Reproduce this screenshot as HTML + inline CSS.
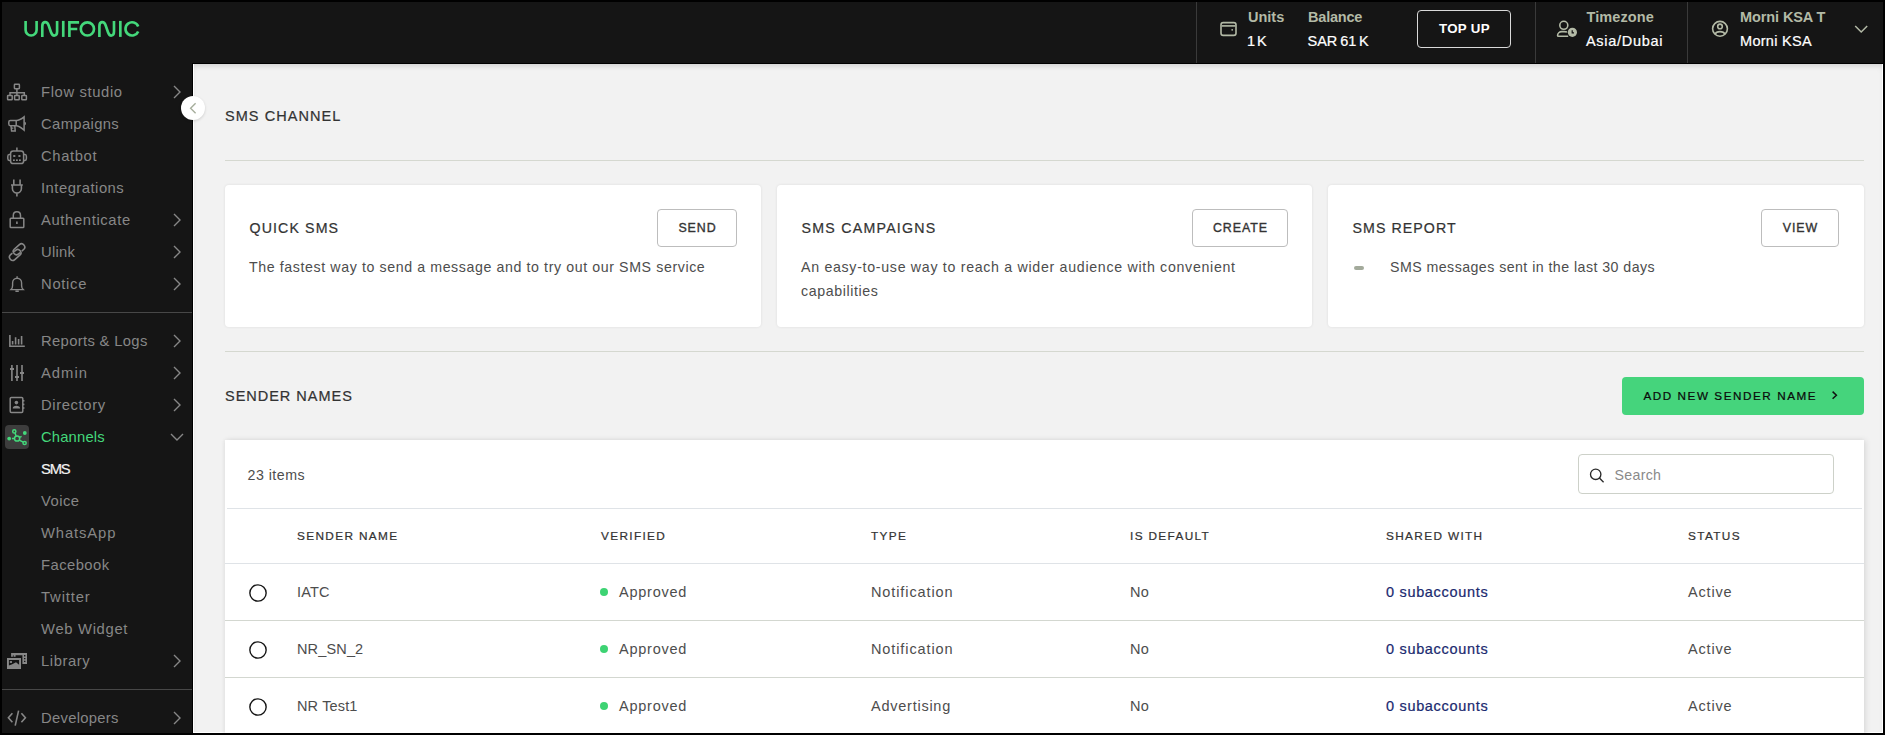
<!DOCTYPE html>
<html><head><meta charset="utf-8"><style>
html,body{margin:0;padding:0;width:1885px;height:735px;overflow:hidden;background:#000}
body{position:relative;font-family:"Liberation Sans",sans-serif}
.t{position:absolute;white-space:nowrap}
</style></head><body>
<div style="position:absolute;left:0;top:0;width:1885px;height:64px;background:#151515"></div>
<svg style="position:absolute;left:0;top:0" width="160" height="60" viewBox="0 0 160 60" fill="none" stroke="#44d87b" stroke-width="2.65">
<path d="M25.6 20.9V30A5.5 5.5 0 0 0 36.6 30V20.9"/>
<path d="M42.3 36.9V26.2C42.3 21.2 47 20.8 48.6 25.2L51 32.2C52.6 37 57.1 36.5 57.1 31.6V20.9"/>
<path d="M63.25 20.9V36.9"/>
<path d="M69.4 36.9V22.3H79.1M69.4 29H77.3"/>
<circle cx="87.4" cy="28.9" r="6.6"/>
<path d="M99.4 36.9V26.2C99.4 21.2 104 20.8 105.6 25.2L108 32.2C109.6 37 114 36.5 114 31.6V20.9"/>
<path d="M120.35 20.9V36.9"/>
<path d="M138.2 26.4A6.6 6.6 0 1 0 138.2 31.4"/>
</svg>
<div style="position:absolute;left:1196px;top:0;width:1px;height:64px;background:#3a3a3a"></div>
<div style="position:absolute;left:1535px;top:0;width:1px;height:64px;background:#3a3a3a"></div>
<div style="position:absolute;left:1687px;top:0;width:1px;height:64px;background:#3a3a3a"></div>
<svg style="position:absolute;left:1218px;top:19px" width="22" height="20" viewBox="1218 19 22 20" fill="none" stroke="#b3baa6" stroke-width="1.6">
<rect x="1221" y="22.6" width="15" height="12.8" rx="2.2"/><path d="M1221.6 25.9H1235.4"/><circle cx="1232.2" cy="29.8" r="0.9" fill="#b3baa6" stroke="none"/>
</svg>
<div class="t" style="left:1248px;top:9.27px;font-size:14.5px;line-height:17.4px;font-weight:700;color:#b3baa6;letter-spacing:0px;">Units</div>
<div class="t" style="left:1247px;top:33.27px;font-size:14.5px;line-height:17.4px;font-weight:400;color:#fff;letter-spacing:-0.2px;word-spacing:-1.6px;-webkit-text-stroke:0.22px #fff;">1 K</div>
<div class="t" style="left:1308px;top:9.27px;font-size:14.5px;line-height:17.4px;font-weight:700;color:#b3baa6;letter-spacing:-0.2px;">Balance</div>
<div class="t" style="left:1307.5px;top:33.27px;font-size:14.5px;line-height:17.4px;font-weight:400;color:#fff;letter-spacing:0px;word-spacing:-1.2px;-webkit-text-stroke:0.22px #fff;">SAR 61 K</div>
<div style="position:absolute;left:1417px;top:10px;width:92px;height:36px;border:1px solid #d9d9d9;border-radius:4px"></div>
<div class="t" style="left:1439px;top:21.01px;font-size:13.3px;line-height:15.96px;font-weight:700;color:#fff;letter-spacing:0.3px;">TOP UP</div>
<svg style="position:absolute;left:1554px;top:19px" width="26" height="22" viewBox="0 0 26 22" fill="none" stroke="#b3baa6" stroke-width="1.6">
<circle cx="9.8" cy="6.3" r="4"/><path d="M13 13C12.2 12.7 11.2 12.6 10.2 12.6H7.8C5.4 12.6 3.6 14.4 3.6 16.2V16.4C3.6 16.9 4 17.2 4.5 17.2H14.2"/>
<circle cx="18.4" cy="13.3" r="4.6" fill="#b3baa6" stroke="none"/><path d="M18.2 11.2V13.8H20" stroke="#151515" stroke-width="1.2"/>
</svg>
<div class="t" style="left:1586.5px;top:9.07px;font-size:14.5px;line-height:17.4px;font-weight:700;color:#b3baa6;letter-spacing:0.1px;">Timezone</div>
<div class="t" style="left:1586px;top:33.47px;font-size:14.5px;line-height:17.4px;font-weight:400;color:#fff;letter-spacing:0.7px;-webkit-text-stroke:0.22px #fff;">Asia/Dubai</div>
<svg style="position:absolute;left:1710px;top:19px" width="20" height="20" viewBox="0 0 20 20" fill="none" stroke="#b3baa6" stroke-width="1.6">
<circle cx="10" cy="9.8" r="7.4"/><circle cx="10" cy="7.4" r="2.3"/><path d="M5 15.3C5.8 13.4 7.6 12.6 10 12.6C12.4 12.6 14.2 13.4 15 15.3"/>
</svg>
<div class="t" style="left:1740px;top:9.17px;font-size:14.5px;line-height:17.4px;font-weight:700;color:#b3baa6;letter-spacing:-0.1px;">Morni KSA T</div>
<div class="t" style="left:1740px;top:32.97px;font-size:14.5px;line-height:17.4px;font-weight:400;color:#fff;letter-spacing:0.3px;-webkit-text-stroke:0.22px #fff;">Morni KSA</div>
<svg style="position:absolute;left:1853px;top:23px" width="16" height="12" viewBox="0 0 16 12" fill="none" stroke="#b3baa6" stroke-width="1.5"><path d="M2.2 3L8.2 9L14.2 3"/></svg>
<div style="position:absolute;left:0;top:64px;width:193px;height:671px;background:#151515"></div>
<div class="t" style="left:41px;top:84.19px;font-size:14.8px;line-height:17.76px;font-weight:400;color:#878787;letter-spacing:0.62px;">Flow studio</div>
<svg style="position:absolute;left:171px;top:84.2px" width="12" height="16" viewBox="0 0 12 16" fill="none" stroke="#878787" stroke-width="1.4"><path d="M3 2L9 8L3 14"/></svg>
<div class="t" style="left:41px;top:116.19px;font-size:14.8px;line-height:17.76px;font-weight:400;color:#878787;letter-spacing:0.36px;">Campaigns</div>
<div class="t" style="left:41px;top:148.19px;font-size:14.8px;line-height:17.76px;font-weight:400;color:#878787;letter-spacing:0.62px;">Chatbot</div>
<div class="t" style="left:41px;top:180.19px;font-size:14.8px;line-height:17.76px;font-weight:400;color:#878787;letter-spacing:0.49px;">Integrations</div>
<div class="t" style="left:41px;top:212.19px;font-size:14.8px;line-height:17.76px;font-weight:400;color:#878787;letter-spacing:0.63px;">Authenticate</div>
<svg style="position:absolute;left:171px;top:212.2px" width="12" height="16" viewBox="0 0 12 16" fill="none" stroke="#878787" stroke-width="1.4"><path d="M3 2L9 8L3 14"/></svg>
<div class="t" style="left:41px;top:244.19px;font-size:14.8px;line-height:17.76px;font-weight:400;color:#878787;letter-spacing:0.23px;">Ulink</div>
<svg style="position:absolute;left:171px;top:244.2px" width="12" height="16" viewBox="0 0 12 16" fill="none" stroke="#878787" stroke-width="1.4"><path d="M3 2L9 8L3 14"/></svg>
<div class="t" style="left:41px;top:276.19px;font-size:14.8px;line-height:17.76px;font-weight:400;color:#878787;letter-spacing:0.69px;">Notice</div>
<svg style="position:absolute;left:171px;top:276.2px" width="12" height="16" viewBox="0 0 12 16" fill="none" stroke="#878787" stroke-width="1.4"><path d="M3 2L9 8L3 14"/></svg>
<div class="t" style="left:41px;top:333.19px;font-size:14.8px;line-height:17.76px;font-weight:400;color:#878787;letter-spacing:0.33px;">Reports &amp; Logs</div>
<svg style="position:absolute;left:171px;top:333.2px" width="12" height="16" viewBox="0 0 12 16" fill="none" stroke="#878787" stroke-width="1.4"><path d="M3 2L9 8L3 14"/></svg>
<div class="t" style="left:41px;top:365.19px;font-size:14.8px;line-height:17.76px;font-weight:400;color:#878787;letter-spacing:1.0px;">Admin</div>
<svg style="position:absolute;left:171px;top:365.2px" width="12" height="16" viewBox="0 0 12 16" fill="none" stroke="#878787" stroke-width="1.4"><path d="M3 2L9 8L3 14"/></svg>
<div class="t" style="left:41px;top:397.19px;font-size:14.8px;line-height:17.76px;font-weight:400;color:#878787;letter-spacing:0.61px;">Directory</div>
<svg style="position:absolute;left:171px;top:397.2px" width="12" height="16" viewBox="0 0 12 16" fill="none" stroke="#878787" stroke-width="1.4"><path d="M3 2L9 8L3 14"/></svg>
<div class="t" style="left:41px;top:653.19px;font-size:14.8px;line-height:17.76px;font-weight:400;color:#878787;letter-spacing:0.58px;">Library</div>
<svg style="position:absolute;left:171px;top:653.2px" width="12" height="16" viewBox="0 0 12 16" fill="none" stroke="#878787" stroke-width="1.4"><path d="M3 2L9 8L3 14"/></svg>
<div class="t" style="left:41px;top:710.09px;font-size:14.8px;line-height:17.76px;font-weight:400;color:#878787;letter-spacing:0.28px;">Developers</div>
<svg style="position:absolute;left:171px;top:710.1px" width="12" height="16" viewBox="0 0 12 16" fill="none" stroke="#878787" stroke-width="1.4"><path d="M3 2L9 8L3 14"/></svg>
<div class="t" style="left:41px;top:429.19px;font-size:14.8px;line-height:17.76px;font-weight:400;color:#44d87b;letter-spacing:0.16px;">Channels</div>
<svg style="position:absolute;left:169px;top:429px" width="16" height="16" viewBox="0 0 16 16" fill="none" stroke="#878787" stroke-width="1.4"><path d="M2 5L8 11L14 5"/></svg>
<div class="t" style="left:41px;top:461.19px;font-size:14.8px;line-height:17.76px;font-weight:400;color:#f2f2f2;letter-spacing:-1.2px;-webkit-text-stroke:0.22px #f2f2f2;">SMS</div>
<div class="t" style="left:41px;top:493.19px;font-size:14.8px;line-height:17.76px;font-weight:400;color:#878787;letter-spacing:0.45px;">Voice</div>
<div class="t" style="left:41px;top:525.19px;font-size:14.8px;line-height:17.76px;font-weight:400;color:#878787;letter-spacing:0.88px;">WhatsApp</div>
<div class="t" style="left:41px;top:557.19px;font-size:14.8px;line-height:17.76px;font-weight:400;color:#878787;letter-spacing:0.45px;">Facebook</div>
<div class="t" style="left:41px;top:589.19px;font-size:14.8px;line-height:17.76px;font-weight:400;color:#878787;letter-spacing:0.87px;">Twitter</div>
<div class="t" style="left:41px;top:621.19px;font-size:14.8px;line-height:17.76px;font-weight:400;color:#878787;letter-spacing:0.68px;">Web Widget</div>
<div style="position:absolute;left:2px;top:312px;width:190px;height:1px;background:#474747"></div>
<div style="position:absolute;left:2px;top:689px;width:190px;height:1px;background:#474747"></div>
<svg style="position:absolute;left:0;top:64px" width="34" height="671" viewBox="0 64 34 671" fill="none" stroke="#878787" stroke-width="1.5">
<!-- flow studio -->
<rect x="14.4" y="84.3" width="5" height="4.4" rx="0.6"/><path d="M16.9 88.7V95M10 95V92.7H24.3V95"/>
<rect x="7.6" y="95.4" width="4.6" height="4.4" rx="0.6"/><rect x="14.6" y="95.4" width="4.6" height="4.4" rx="0.6"/><rect x="21.8" y="95.4" width="4.6" height="4.4" rx="0.6"/>
<!-- megaphone -->
<path d="M16.2 120.5H10.4C9.5 120.5 8.8 121.2 8.8 122.1V124.1C8.8 125 9.5 125.7 10.4 125.7H16.2C19.2 125.7 21.8 128.2 24.1 130.2V116.9C21.8 118.8 19.2 120.5 16.2 120.5Z"/><path d="M16.2 120.5V125.7M11 125.8L11.6 131H15.2L14.8 125.8M12.6 127.4V128.8M24.4 122.4C25.6 122.6 25.6 124.6 24.4 124.8"/>
<!-- robot -->
<rect x="10.6" y="151" width="13" height="12.6" rx="2.6"/><path d="M16.9 147.6V151M10.6 154.6H9.2C8.2 154.6 7.8 155.4 7.8 156.4V158.6C7.8 159.6 8.2 160.4 9.2 160.4H10.6M23.6 154.6H25C26 154.6 26.4 155.4 26.4 156.4V158.6C26.4 159.6 26 160.4 25 160.4H23.6"/>
<g fill="#878787" stroke="none"><ellipse cx="14.3" cy="156" rx="1.3" ry="1"/><ellipse cx="19.4" cy="156" rx="1.3" ry="1"/><rect x="13" y="159.4" width="1.8" height="1.6"/><rect x="16" y="159.4" width="1.8" height="1.6"/><rect x="19" y="159.4" width="1.8" height="1.6"/></g>
<!-- plug -->
<path d="M13.8 179.6V184.4M20.1 179.6V184.4M11 185H22.8M12.4 185V188.6C12.4 191 14.4 193 16.9 193C19.4 193 21.4 191 21.4 188.6V185M16.9 193V196.6" stroke-width="1.6"/>
<!-- lock -->
<path d="M13.3 218V215.4C13.3 213.2 14.9 211.7 16.9 211.7C18.9 211.7 20.5 213.2 20.5 215.4V218"/><rect x="10.2" y="218.2" width="13.6" height="9.4" rx="0.8"/><path d="M16.9 221.6V224" stroke-width="1.6"/>
<!-- link -->
<g transform="translate(17.1 252.1) rotate(-41)" stroke-width="1.6">
<path d="M-4.2 -2.3H-6.6A3.2 3.2 0 0 0 -6.6 4.1H0A3.2 3.2 0 0 0 0 -2.3H-2"/>
<path d="M2 2.3H0A3.2 3.2 0 0 1 0 -4.1H6.6A3.2 3.2 0 0 1 6.6 2.3H4.2"/>
</g>
<!-- bell -->
<path d="M11 289.6H23.2C22 288.4 21.6 287 21.6 285.4V283C21.6 280.2 19.6 278.2 17.1 278.2C14.6 278.2 12.6 280.2 12.6 283V285.4C12.6 287 12.2 288.4 11 289.6ZM17.1 276.3V278.2" stroke-width="1.4"/><path d="M15.4 291.2H18.8" stroke-width="1.6"/>
<!-- reports -->
<path d="M9.9 335V346.3H24.8" stroke-width="1.6"/><path d="M12.6 341V344.4M15.6 337.3V344.4M18.6 339V344.4M21.6 336V344.4" stroke-width="1.6"/>
<!-- admin -->
<path d="M11.9 365V381M17 365V381M22 365V381" stroke-width="1.6"/><path d="M10 369H14M15 377H19M20 373H24" stroke-width="1.8"/>
<!-- directory -->
<rect x="10.2" y="397.4" width="12.6" height="15" rx="1.2"/><g fill="#878787" stroke="none"><circle cx="16.4" cy="402.6" r="1.8"/><path d="M12.7 408.6C12.7 406.6 14.2 405.8 16.4 405.8C18.6 405.8 20.1 406.6 20.1 408.6Z"/><rect x="22.8" y="400" width="1.6" height="1.6"/><rect x="22.8" y="403.6" width="1.6" height="1.6"/><rect x="22.8" y="407.2" width="1.6" height="1.6"/></g>
<!-- library -->
<g fill="#878787" stroke="none"><path fill-rule="evenodd" d="M7 657.9H21V668.9H7ZM8.9 659.9V665.4L12.2 664.3L16 662.3L19.1 664.8V659.9Z"/><rect x="9.8" y="661.1" width="2.2" height="1.8"/>
<path fill-rule="evenodd" d="M11.1 653H27V663.9H22.4V655.2H15.6V656.7H13.6V655.2H12.9V656.7H11.1ZM24 655.1h1.4v1.4h-1.4zM24 657.9h1.4v1.4h-1.4zM24 660.7h1.4v1.4h-1.4z"/></g>
<!-- developers -->
<path d="M12.4 713.3L8.4 717.8L12.4 722.3M21.4 713.3L25.4 717.8L21.4 722.3M18.6 710.6L15.2 725.6" stroke-width="1.6"/>
</svg>
<div style="position:absolute;left:5px;top:425px;width:24px;height:24px;border-radius:4px;background:#3d3d3d"></div>
<svg style="position:absolute;left:5px;top:425px" width="24" height="24" viewBox="5 425 24 24" fill="none" stroke="#44d87b" stroke-width="1.5">
<circle cx="17.1" cy="438.5" r="2.6"/><circle cx="14.3" cy="431.4" r="1.6"/><circle cx="24.6" cy="443" r="1.6"/>
<path d="M15 433L16.1 435.9M19.2 440.2L23.3 442.2M19.6 437.4L21.6 436.4M14.5 438.5H12"/>
<g fill="#44d87b" stroke="none"><circle cx="24.8" cy="433" r="1.9"/><circle cx="9.2" cy="438.6" r="1.9"/></g>
</svg>
<div style="position:absolute;left:193px;top:64px;width:1690px;height:669px;background:#f2f2f2;box-shadow:inset 0 3px 6px -2px rgba(0,0,0,0.18)"></div>
<div style="position:absolute;left:192px;top:63px;width:1px;height:671px;background:#000"></div>
<div style="position:absolute;left:193px;top:64px;width:1px;height:669px;background:#fff"></div>
<div style="position:absolute;left:1882px;top:64px;width:1px;height:669px;background:#fff"></div>
<div style="position:absolute;left:193px;top:732px;width:1690px;height:1px;background:#fff"></div>
<div style="position:absolute;left:192px;top:63px;width:1692px;height:1px;background:#000"></div>
<div class="t" style="left:225px;top:108.27px;font-size:14.5px;line-height:17.4px;font-weight:400;color:#333;letter-spacing:1.05px;-webkit-text-stroke:0.22px #333;">SMS CHANNEL</div>
<div style="position:absolute;left:225px;top:160px;width:1639px;height:1px;background:#d5d8d0"></div>
<div style="position:absolute;left:225px;top:185px;width:536px;height:142px;background:#fff;border-radius:4px;box-shadow:0 0 3px rgba(0,0,0,0.09)"></div>
<div class="t" style="left:249.6px;top:220.16px;font-size:14.2px;line-height:17.04px;font-weight:400;color:#333;letter-spacing:1.1px;-webkit-text-stroke:0.22px #333;">QUICK SMS</div>
<div style="position:absolute;left:657px;top:209px;width:78px;height:36px;border:1px solid #bdbdbd;border-radius:4px;background:#fff"></div>
<div class="t" style="left:657px;top:209px;width:80px;height:38px;line-height:38px;text-align:center;font-size:12.4px;font-weight:400;-webkit-text-stroke:0.35px #333;color:#333;letter-spacing:0.95px;text-indent:1px">SEND</div>
<div style="position:absolute;left:777px;top:185px;width:535px;height:142px;background:#fff;border-radius:4px;box-shadow:0 0 3px rgba(0,0,0,0.09)"></div>
<div class="t" style="left:801.6px;top:220.16px;font-size:14.2px;line-height:17.04px;font-weight:400;color:#333;letter-spacing:1.24px;-webkit-text-stroke:0.22px #333;">SMS CAMPAIGNS</div>
<div style="position:absolute;left:1192px;top:209px;width:94px;height:36px;border:1px solid #bdbdbd;border-radius:4px;background:#fff"></div>
<div class="t" style="left:1192px;top:209px;width:96px;height:38px;line-height:38px;text-align:center;font-size:12.4px;font-weight:400;-webkit-text-stroke:0.35px #333;color:#333;letter-spacing:0.95px;text-indent:1px">CREATE</div>
<div style="position:absolute;left:1328px;top:185px;width:536px;height:142px;background:#fff;border-radius:4px;box-shadow:0 0 3px rgba(0,0,0,0.09)"></div>
<div class="t" style="left:1352.6px;top:220.16px;font-size:14.2px;line-height:17.04px;font-weight:400;color:#333;letter-spacing:1.05px;-webkit-text-stroke:0.22px #333;">SMS REPORT</div>
<div style="position:absolute;left:1761px;top:209px;width:76px;height:36px;border:1px solid #bdbdbd;border-radius:4px;background:#fff"></div>
<div class="t" style="left:1761px;top:209px;width:78px;height:38px;line-height:38px;text-align:center;font-size:12.4px;font-weight:400;-webkit-text-stroke:0.35px #333;color:#333;letter-spacing:0.95px;text-indent:1px">VIEW</div>
<div class="t" style="left:249px;top:258.96px;font-size:14.2px;line-height:17.04px;font-weight:400;color:#4d4d4d;letter-spacing:0.6px;">The fastest way to send a message and to try out our SMS service</div>
<div class="t" style="left:801px;top:258.96px;font-size:14.2px;line-height:17.04px;font-weight:400;color:#4d4d4d;letter-spacing:0.7px;">An easy-to-use way to reach a wider audience with convenient</div>
<div class="t" style="left:801px;top:282.96px;font-size:14.2px;line-height:17.04px;font-weight:400;color:#4d4d4d;letter-spacing:0.6px;">capabilities</div>
<div style="position:absolute;left:1354px;top:266px;width:10px;height:4px;border-radius:2px;background:#a3aa9b"></div>
<div class="t" style="left:1390px;top:258.96px;font-size:14.2px;line-height:17.04px;font-weight:400;color:#4d4d4d;letter-spacing:0.45px;">SMS messages sent in the last 30 days</div>
<div style="position:absolute;left:225px;top:351px;width:1639px;height:1px;background:#d5d8d0"></div>
<div class="t" style="left:225px;top:388.27px;font-size:14.5px;line-height:17.4px;font-weight:400;color:#333;letter-spacing:0.98px;-webkit-text-stroke:0.22px #333;">SENDER NAMES</div>
<div style="position:absolute;left:1622px;top:377px;width:242px;height:38px;border-radius:4px;background:#45d47c"></div>
<div class="t" style="left:1643.5px;top:388.92px;font-size:11.7px;line-height:14.04px;font-weight:400;color:#0a0a0a;letter-spacing:1.55px;-webkit-text-stroke:0.22px #0a0a0a;">ADD NEW SENDER NAME</div>
<svg style="position:absolute;left:1829px;top:389px" width="12" height="12" viewBox="0 0 12 12" fill="none" stroke="#111" stroke-width="1.5"><path d="M3.6 2.6L7.4 6.2L3.6 9.8"/></svg>
<div style="position:absolute;left:225px;top:440px;width:1639px;height:300px;background:#fff;box-shadow:2px 0 6px rgba(0,0,0,0.09), -1px 0 4px rgba(0,0,0,0.05)"></div>
<div class="t" style="left:247.5px;top:466.56px;font-size:14.2px;line-height:17.04px;font-weight:400;color:#4d4d4d;letter-spacing:0.5px;">23 items</div>
<div style="position:absolute;left:1578px;top:454px;width:254px;height:38px;border:1px solid #cdd1c9;border-radius:4px;background:#fff"></div>
<svg style="position:absolute;left:1587px;top:466px" width="20" height="20" viewBox="0 0 20 20" fill="none" stroke="#2a2a2a" stroke-width="1.35"><circle cx="8.7" cy="8.3" r="5.2"/><path d="M12.4 12L16.6 16.2"/></svg>
<div class="t" style="left:1614.5px;top:467.06px;font-size:14.2px;line-height:17.04px;font-weight:400;color:#8a8a8a;letter-spacing:0.3px;">Search</div>
<div style="position:absolute;left:227px;top:508px;width:1635px;height:1px;background:#dfe3e7"></div>
<div class="t" style="left:297px;top:528.83px;font-size:11.8px;line-height:14.16px;font-weight:400;color:#333;letter-spacing:1.35px;-webkit-text-stroke:0.22px #333;">SENDER NAME</div>
<div class="t" style="left:601px;top:528.83px;font-size:11.8px;line-height:14.16px;font-weight:400;color:#333;letter-spacing:1.35px;-webkit-text-stroke:0.22px #333;">VERIFIED</div>
<div class="t" style="left:871px;top:528.83px;font-size:11.8px;line-height:14.16px;font-weight:400;color:#333;letter-spacing:1.35px;-webkit-text-stroke:0.22px #333;">TYPE</div>
<div class="t" style="left:1130px;top:528.83px;font-size:11.8px;line-height:14.16px;font-weight:400;color:#333;letter-spacing:1.35px;-webkit-text-stroke:0.22px #333;">IS DEFAULT</div>
<div class="t" style="left:1386px;top:528.83px;font-size:11.8px;line-height:14.16px;font-weight:400;color:#333;letter-spacing:1.35px;-webkit-text-stroke:0.22px #333;">SHARED WITH</div>
<div class="t" style="left:1688px;top:528.83px;font-size:11.8px;line-height:14.16px;font-weight:400;color:#333;letter-spacing:1.35px;-webkit-text-stroke:0.22px #333;">STATUS</div>
<div style="position:absolute;left:225px;top:563px;width:1639px;height:1px;background:#dfe3e7"></div>
<svg style="position:absolute;left:249px;top:584px" width="18" height="18" viewBox="0 0 18 18"><circle cx="9" cy="9" r="8.15" fill="none" stroke="#151515" stroke-width="1.4"/></svg>
<div class="t" style="left:297px;top:584.27px;font-size:14.5px;line-height:17.4px;font-weight:400;color:#4d4d4d;letter-spacing:0.15px;">IATC</div>
<div style="position:absolute;left:600px;top:588px;width:8px;height:8px;border-radius:50%;background:#3dd373"></div>
<div class="t" style="left:619px;top:584.27px;font-size:14.5px;line-height:17.4px;font-weight:400;color:#4d4d4d;letter-spacing:0.75px;">Approved</div>
<div class="t" style="left:871px;top:584.27px;font-size:14.5px;line-height:17.4px;font-weight:400;color:#4d4d4d;letter-spacing:0.89px;">Notification</div>
<div class="t" style="left:1130px;top:584.27px;font-size:14.5px;line-height:17.4px;font-weight:400;color:#4d4d4d;letter-spacing:0.3px;">No</div>
<div class="t" style="left:1386px;top:584.27px;font-size:14.5px;line-height:17.4px;font-weight:400;color:#1b2a70;letter-spacing:0.68px;-webkit-text-stroke:0.22px #1b2a70;">0 subaccounts</div>
<div class="t" style="left:1688px;top:584.27px;font-size:14.5px;line-height:17.4px;font-weight:400;color:#4d4d4d;letter-spacing:0.82px;">Active</div>
<div style="position:absolute;left:225px;top:620px;width:1639px;height:1px;background:#d3d7d0"></div>
<svg style="position:absolute;left:249px;top:641px" width="18" height="18" viewBox="0 0 18 18"><circle cx="9" cy="9" r="8.15" fill="none" stroke="#151515" stroke-width="1.4"/></svg>
<div class="t" style="left:297px;top:641.27px;font-size:14.5px;line-height:17.4px;font-weight:400;color:#4d4d4d;letter-spacing:0.15px;">NR_SN_2</div>
<div style="position:absolute;left:600px;top:645px;width:8px;height:8px;border-radius:50%;background:#3dd373"></div>
<div class="t" style="left:619px;top:641.27px;font-size:14.5px;line-height:17.4px;font-weight:400;color:#4d4d4d;letter-spacing:0.75px;">Approved</div>
<div class="t" style="left:871px;top:641.27px;font-size:14.5px;line-height:17.4px;font-weight:400;color:#4d4d4d;letter-spacing:0.89px;">Notification</div>
<div class="t" style="left:1130px;top:641.27px;font-size:14.5px;line-height:17.4px;font-weight:400;color:#4d4d4d;letter-spacing:0.3px;">No</div>
<div class="t" style="left:1386px;top:641.27px;font-size:14.5px;line-height:17.4px;font-weight:400;color:#1b2a70;letter-spacing:0.68px;-webkit-text-stroke:0.22px #1b2a70;">0 subaccounts</div>
<div class="t" style="left:1688px;top:641.27px;font-size:14.5px;line-height:17.4px;font-weight:400;color:#4d4d4d;letter-spacing:0.82px;">Active</div>
<div style="position:absolute;left:225px;top:677px;width:1639px;height:1px;background:#d3d7d0"></div>
<svg style="position:absolute;left:249px;top:698px" width="18" height="18" viewBox="0 0 18 18"><circle cx="9" cy="9" r="8.15" fill="none" stroke="#151515" stroke-width="1.4"/></svg>
<div class="t" style="left:297px;top:698.27px;font-size:14.5px;line-height:17.4px;font-weight:400;color:#4d4d4d;letter-spacing:0.15px;">NR Test1</div>
<div style="position:absolute;left:600px;top:702px;width:8px;height:8px;border-radius:50%;background:#3dd373"></div>
<div class="t" style="left:619px;top:698.27px;font-size:14.5px;line-height:17.4px;font-weight:400;color:#4d4d4d;letter-spacing:0.75px;">Approved</div>
<div class="t" style="left:871px;top:698.27px;font-size:14.5px;line-height:17.4px;font-weight:400;color:#4d4d4d;letter-spacing:0.75px;">Advertising</div>
<div class="t" style="left:1130px;top:698.27px;font-size:14.5px;line-height:17.4px;font-weight:400;color:#4d4d4d;letter-spacing:0.3px;">No</div>
<div class="t" style="left:1386px;top:698.27px;font-size:14.5px;line-height:17.4px;font-weight:400;color:#1b2a70;letter-spacing:0.68px;-webkit-text-stroke:0.22px #1b2a70;">0 subaccounts</div>
<div class="t" style="left:1688px;top:698.27px;font-size:14.5px;line-height:17.4px;font-weight:400;color:#4d4d4d;letter-spacing:0.82px;">Active</div>
<div style="position:absolute;left:181px;top:96px;width:24px;height:24px;border-radius:50%;background:#fff;box-shadow:0 1px 3px rgba(0,0,0,0.15)"></div>
<svg style="position:absolute;left:181px;top:96px" width="24" height="24" viewBox="0 0 24 24" fill="none" stroke="#a6ae9c" stroke-width="1.4"><path d="M14.6 7.2L9.6 12.2L14.6 17.2"/></svg>
<div style="position:absolute;left:0;top:0;width:1885px;height:735px;box-sizing:border-box;border-style:solid;border-color:#000;border-width:2px 2px 2px 2px"></div>
</body></html>
